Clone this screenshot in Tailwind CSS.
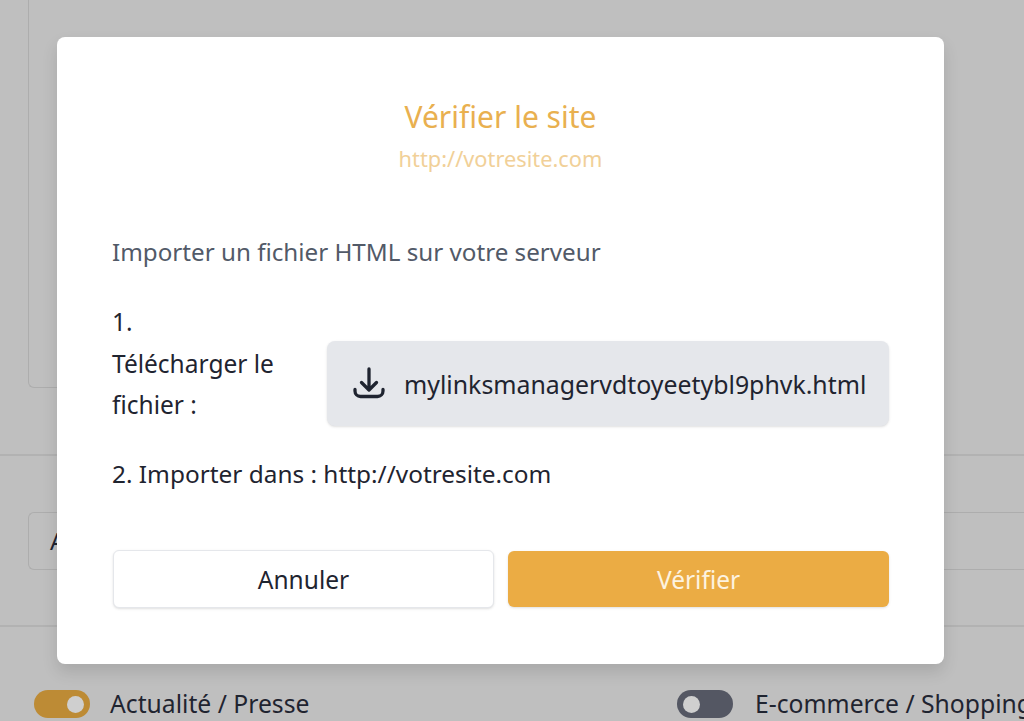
<!DOCTYPE html>
<html lang="fr">
  <head>
    <meta charset="UTF-8" />
    <meta name="viewport" content="width=device-width, initial-scale=1.0" />
    <title>Vérifier le site</title>
    <script src="https://cdn.jsdelivr.net/npm/@tailwindcss/browser@4"></script>
  </head>
  <body class="relative w-[1024px] h-[721px] overflow-hidden bg-[#bfbfbf] font-['Noto_Sans',sans-serif] text-[#1f2430]">
    <!-- page behind the overlay -->
    <div class="flex flex-col h-full">
      <div class="h-[388px] pl-7 shrink-0">
        <div class="h-full w-[200px] border-l border-b border-[#adadad] rounded-bl-md"></div>
      </div>
      <div class="h-[68px] shrink-0 border-b-2 border-[#b2b2b2]"></div>
      <div class="h-[171px] shrink-0 border-b-2 border-[#b2b2b2] pt-[56px] pl-7">
        <div class="h-[58px] border-l border-y border-[#adadad] rounded-l-md flex items-center pl-[21px] text-[24px]">A</div>
      </div>
      <div class="flex pl-[34px] pt-[62px] text-[24.7px] leading-[30px]">
        <div class="flex items-center gap-5 w-[643px] shrink-0">
          <span class="w-14 h-7 shrink-0 rounded-full bg-[#bd8b35] flex items-center justify-end pr-[6px]"><span class="w-[17px] h-[17px] rounded-full bg-[#cfcfcf]"></span></span>
          <span>Actualité / Presse</span>
        </div>
        <div class="flex items-center gap-[22px] shrink-0 whitespace-nowrap">
          <span class="w-14 h-7 shrink-0 rounded-full bg-[#545763] flex items-center pl-[6px]"><span class="w-[17px] h-[17px] rounded-full bg-[#cfcfcf]"></span></span>
          <span>E-commerce / Shopping</span>
        </div>
      </div>
    </div>

    <!-- modal -->
    <div class="absolute left-[57px] top-[37px] w-[887px] h-[627px] bg-white rounded-lg shadow-[0_8px_16px_rgba(0,0,0,0.12)] px-[55px] pt-[60px]">
      <h2 class="text-center text-[30px] leading-10 text-[#e9b04f]">Vérifier le site</h2>
      <p class="mt-[6px] text-center text-[21.8px] leading-8 text-[#f1d098]">http://votresite.com</p>
      <p class="mt-[61px] text-[24.2px] leading-8 text-[#525a68]">Importer un fichier HTML sur votre serveur</p>
      <div class="mt-[33px] flex items-end text-[24.5px] leading-[41.5px]">
        <div class="w-[215px] shrink-0">1.<br />Télécharger le fichier :</div>
        <div class="flex items-center gap-[19px] w-[562px] h-[85px] pl-[26px] bg-[#e5e7eb] rounded-lg shadow-sm whitespace-nowrap">
          <svg class="w-8 h-8 shrink-0" viewBox="0 0 32 32" fill="none" stroke="#1f2430" stroke-width="3.300" stroke-linecap="round" stroke-linejoin="round">
            <path d="M16 2v21M8.500 15.500l7.500 7.500 7.500-7.500M2 22.500v1.500a5.500 5.500 0 0 0 5.500 5.500h17a5.500 5.500 0 0 0 5.500-5.500v-1.500" />
          </svg>
          <span class="pt-[3px] text-[24.86px]">mylinksmanagervdtoyeetybl9phvk.html</span>
        </div>
      </div>
      <p class="mt-[32px] text-[24.4px] leading-8">2. Importer dans : http://votresite.com</p>
      <div class="mt-[60px] ml-px flex items-center gap-[14px] text-[24.5px]">
        <button class="w-[381px] h-[58px] pt-[3px] bg-white border border-[#e5e7eb] rounded-md shadow-sm">Annuler</button>
        <button class="w-[381px] h-[56px] pt-[3px] bg-[#ebac44] text-[#fdf3e0] rounded-md shadow-sm">Vérifier</button>
      </div>
    </div>
  </body>
</html>
